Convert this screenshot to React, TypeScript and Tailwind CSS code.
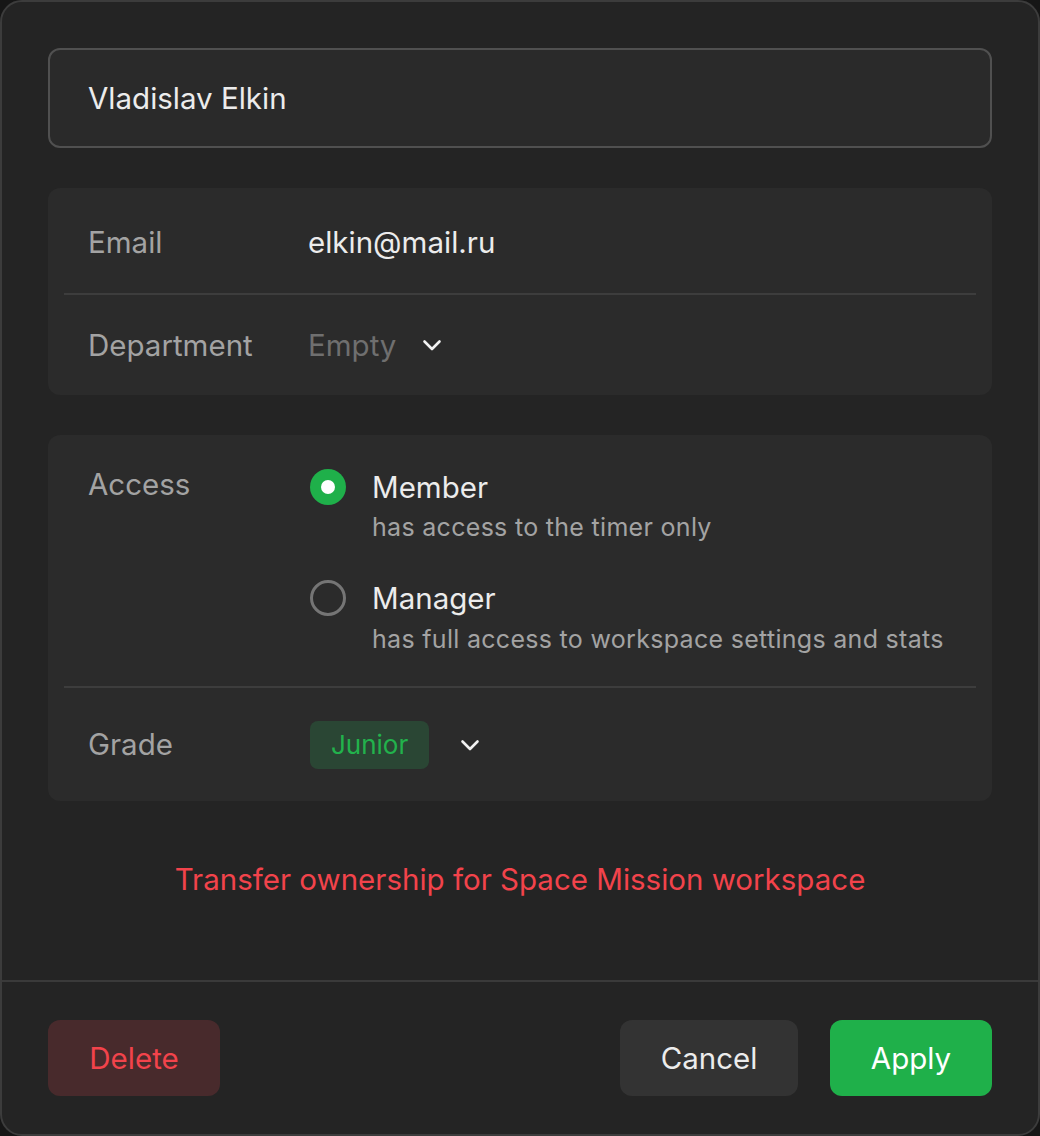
import React from 'react';

const Chevron = () => (
  <svg width="20" height="20" viewBox="0 0 20 20" fill="none" className="text-[#f2f2f2]">
    <path d="M2.5 6.5L10 14L17.5 6.5" stroke="currentColor" strokeWidth="2.6" strokeLinecap="round" strokeLinejoin="round" />
  </svg>
);

const Radio = ({checked}: {checked: boolean}) =>
  checked ? (
    <span className="w-9 h-9 rounded-full bg-[#1fb04a] flex items-center justify-center shrink-0">
      <span className="w-3.5 h-3.5 rounded-full bg-white" />
    </span>
  ) : (
    <span className="w-9 h-9 rounded-full border-[3px] border-[#757575] shrink-0" />
  );

const App = () => {
  return (
    <div className="w-[1040px] h-[1136px] bg-[#161616] font-['Inter','Liberation_Sans',sans-serif]">
      <div className="w-full h-full bg-[#242424] border-2 border-[#3c3c3c] rounded-[22px] flex flex-col overflow-hidden">
        <div className="flex-1 px-[46px] pt-[46px]">
          <div className="h-[100px] rounded-[12px] border-2 border-[#505050] bg-[#2a2a2a] flex items-center px-[38px] text-[29.5px] text-[#ececec]">
            Vladislav Elkin
          </div>

          <div className="mt-10 rounded-[12px] bg-[#2b2b2b] px-4">
            <div className="h-[107px] pt-1 flex items-center px-6 border-b-2 border-[#3d3d3d] text-[29.5px]">
              <span className="w-[220px] text-[#a3a3a3]">Email</span>
              <span className="text-[#ececec]">elkin@mail.ru</span>
            </div>
            <div className="h-[100px] flex items-center px-6 text-[29.5px]">
              <span className="w-[220px] text-[#a3a3a3]">Department</span>
              <span className="text-[#6f6f6f]">Empty</span>
              <span className="ml-[26px] flex"><Chevron /></span>
            </div>
          </div>

          <div className="mt-10 rounded-[12px] bg-[#2b2b2b] px-4">
            <div className="flex px-6 pt-[32px] pb-[30px] border-b-2 border-[#3d3d3d]">
              <span className="w-[220px] text-[29.5px] leading-[34px] text-[#a3a3a3]">Access</span>
              <div className="flex flex-col gap-[34px] pl-[2px]">
                <div className="flex gap-[26px]">
                  <div className="h-[40px] flex items-center"><Radio checked /></div>
                  <div className="flex flex-col">
                    <span className="text-[29.5px] leading-[40px] text-[#ececec]">Member</span>
                    <span className="text-[25px] leading-[34px] mt-[3px] text-[#a3a3a3] tracking-[0.3px]">has access to the timer only</span>
                  </div>
                </div>
                <div className="flex gap-[26px]">
                  <div className="h-[40px] flex items-center"><Radio checked={false} /></div>
                  <div className="flex flex-col">
                    <span className="text-[29.5px] leading-[40px] text-[#ececec]">Manager</span>
                    <span className="text-[25px] leading-[34px] mt-[4px] text-[#a3a3a3] tracking-[0.3px]">has full access to workspace settings and stats</span>
                  </div>
                </div>
              </div>
            </div>
            <div className="h-[113px] flex items-center px-6 text-[29.5px]">
              <span className="w-[222px] text-[#a3a3a3]">Grade</span>
              <span className="h-12 px-[21px] rounded-[8px] bg-[#2a4634] text-[#22b24c] text-[26px] flex items-center">Junior</span>
              <span className="ml-[31px] flex"><Chevron /></span>
            </div>
          </div>

          <div className="mt-[56px] text-center text-[29.5px] text-[#f2434b]">
            Transfer ownership for Space Mission workspace
          </div>
        </div>

        <div className="h-[154px] border-t-2 border-[#3a3a3a] px-[46px] flex items-center">
          <button className="h-[76px] w-[172px] rounded-[12px] bg-[#482a2c] text-[#f2434b] text-[29.5px]">Delete</button>
          <div className="ml-auto flex gap-8">
            <button className="h-[76px] w-[178px] rounded-[12px] bg-[#333333] text-[#ececec] text-[29.5px]">Cancel</button>
            <button className="h-[76px] w-[162px] rounded-[12px] bg-[#1fb04a] text-white text-[29.5px]">Apply</button>
          </div>
        </div>
      </div>
    </div>
  );
};

export default App;
